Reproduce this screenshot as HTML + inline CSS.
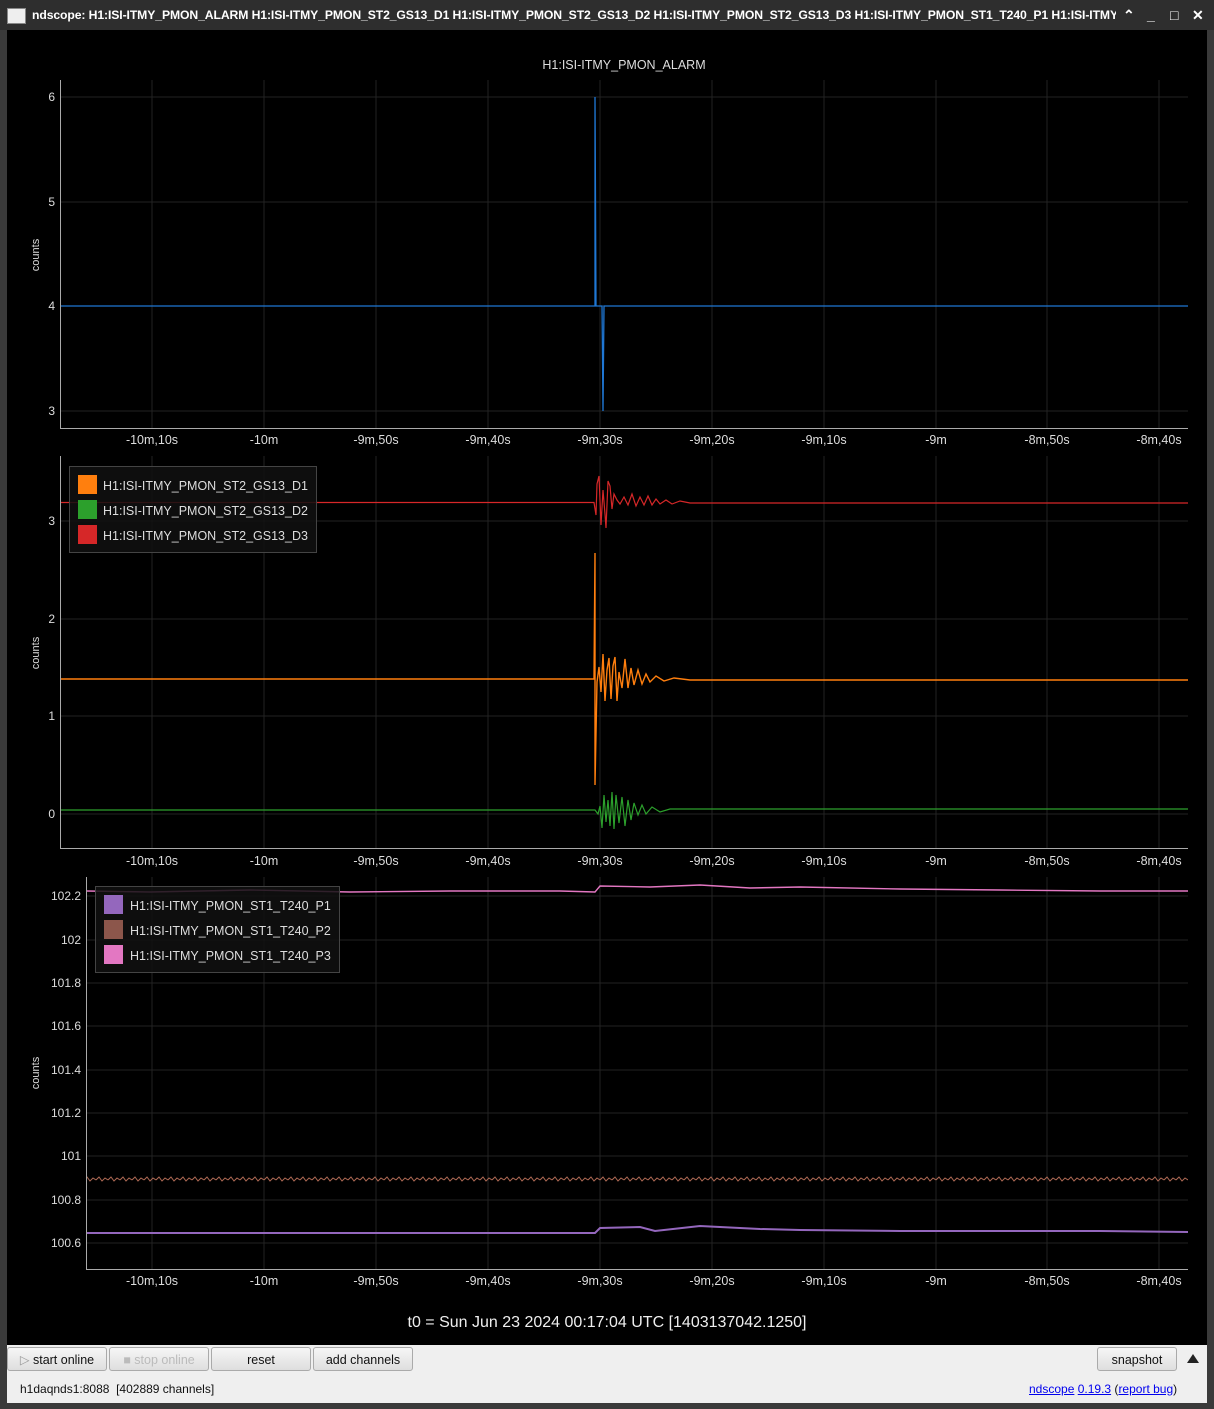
<!DOCTYPE html>
<html><head><meta charset="utf-8"><style>
body{margin:0;width:1214px;height:1409px;background:#3a3a3a;font-family:"Liberation Sans",sans-serif;overflow:hidden;position:relative}
.title{position:absolute;left:0;top:0;width:1214px;height:30px;background:#2e2e2e;color:#fff;font-weight:bold;font-size:12.2px;line-height:30px}
.title .ic{position:absolute;left:7px;top:8px;width:17px;height:14px;background:#eee;border:1px solid #888}
.title .t{position:absolute;left:32px;top:0;width:1084px;overflow:hidden;white-space:nowrap;letter-spacing:-0.1px}
.title .b{position:absolute;top:0;font-size:14px}
.panel{position:absolute;left:7px;top:1345px;width:1200px;height:58px;background:#efefef}
.btn{position:absolute;top:2px;height:24px;border:1px solid #aaa;border-radius:3px;background:linear-gradient(#f6f6f6,#dedede);font-size:12.5px;line-height:24px;text-align:center;color:#111;box-sizing:border-box}
.st{position:absolute;top:37px;font-size:12px;color:#111}
a{color:#00e;text-decoration:underline}
</style></head><body>
<div class="title"><div class="ic"></div><div class="t">ndscope: H1:ISI-ITMY_PMON_ALARM H1:ISI-ITMY_PMON_ST2_GS13_D1 H1:ISI-ITMY_PMON_ST2_GS13_D2 H1:ISI-ITMY_PMON_ST2_GS13_D3 H1:ISI-ITMY_PMON_ST1_T240_P1 H1:ISI-ITMY</div>
<span class="b" style="left:1123px">&#8963;</span><span class="b" style="left:1147px">_</span><span class="b" style="left:1170px">&#9633;</span><span class="b" style="left:1192px">&#10005;</span></div>
<svg style="position:absolute;left:7px;top:30px" width="1200" height="1315" viewBox="7 30 1200 1315" font-family="Liberation Sans" font-size="12" fill="#ddd">
<defs>
<pattern id="zz" width="12" height="8" patternUnits="userSpaceOnUse" x="0" y="1175"><path d="M0 5 L3 2 L6 6 L9 3 L12 5" stroke="#b06a55" fill="none" stroke-width="1"/></pattern>
</defs>
<rect x="7" y="30" width="1200" height="1315" fill="#000"/>
<g stroke="#222" stroke-width="1">
<path d="M152 80V428M264 80V428M376 80V428M488 80V428M600 80V428M712 80V428M824 80V428M936 80V428M1047 80V428M1159 80V428M60 97H1188M60 202H1188M60 306H1188M60 411H1188"/>
<path d="M152 456V848M264 456V848M376 456V848M488 456V848M600 456V848M712 456V848M824 456V848M936 456V848M1047 456V848M1159 456V848M60 521H1188M60 619H1188M60 716H1188M60 814H1188"/>
<path d="M152 877V1269M264 877V1269M376 877V1269M488 877V1269M600 877V1269M712 877V1269M824 877V1269M936 877V1269M1047 877V1269M1159 877V1269M86 896H1188M86 940H1188M86 983H1188M86 1026H1188M86 1070H1188M86 1113H1188M86 1156H1188M86 1200H1188M86 1243H1188"/>
</g>
<g stroke="#aaa" stroke-width="1" fill="none">
<path d="M60.5 80V428.5H1188"/><path d="M60.5 456V848.5H1188"/><path d="M86.5 877V1269.5H1188"/>
</g>
<text x="624" y="69" text-anchor="middle" font-size="12.5">H1:ISI-ITMY_PMON_ALARM</text>
<g text-anchor="end"><text x="55" y="101">6</text><text x="55" y="206">5</text><text x="55" y="310">4</text><text x="55" y="415">3</text>
<text x="55" y="525">3</text><text x="55" y="623">2</text><text x="55" y="720">1</text><text x="55" y="818">0</text>
<text x="81" y="900">102.2</text><text x="81" y="944">102</text><text x="81" y="987">101.8</text><text x="81" y="1030">101.6</text><text x="81" y="1074">101.4</text><text x="81" y="1117">101.2</text><text x="81" y="1160">101</text><text x="81" y="1204">100.8</text><text x="81" y="1247">100.6</text></g>
<g font-size="11"><text transform="translate(39 255) rotate(-90)" text-anchor="middle">counts</text><text transform="translate(39 653) rotate(-90)" text-anchor="middle">counts</text><text transform="translate(39 1073) rotate(-90)" text-anchor="middle">counts</text></g>
<g text-anchor="middle" font-size="12.5">
<g transform="translate(0 444)"><text x="152">-10m,10s</text><text x="264">-10m</text><text x="376">-9m,50s</text><text x="488">-9m,40s</text><text x="600">-9m,30s</text><text x="712">-9m,20s</text><text x="824">-9m,10s</text><text x="936">-9m</text><text x="1047">-8m,50s</text><text x="1159">-8m,40s</text></g>
<g transform="translate(0 865)"><text x="152">-10m,10s</text><text x="264">-10m</text><text x="376">-9m,50s</text><text x="488">-9m,40s</text><text x="600">-9m,30s</text><text x="712">-9m,20s</text><text x="824">-9m,10s</text><text x="936">-9m</text><text x="1047">-8m,50s</text><text x="1159">-8m,40s</text></g>
<g transform="translate(0 1285)"><text x="152">-10m,10s</text><text x="264">-10m</text><text x="376">-9m,50s</text><text x="488">-9m,40s</text><text x="600">-9m,30s</text><text x="712">-9m,20s</text><text x="824">-9m,10s</text><text x="936">-9m</text><text x="1047">-8m,50s</text><text x="1159">-8m,40s</text></g>
</g>
<path d="M61 306H595V97L596 306H602V306L603 411L604 306H1188" stroke="#1f77d4" fill="none" stroke-width="1.3"/>
<path d="M61 502.5H594L596 515L597 484L599 476L601 525L603 490L605 514L606 528L608 481L610 486L612 509L614 494L617 500L620 504L624 497L628 505L632 494L636 506L640 497L644 505L648 496L652 505L656 499L660 504L666 500L672 504L680 501L690 503H1188" stroke="#d62728" fill="none" stroke-width="1.2"/>
<path d="M61 679H594L595 553V785L597 682L599 667L601 692L603 654L605 701L607 670L609 658L611 699L613 666L615 657L617 701L619 672L622 688L625 659L628 688L631 668L634 685L638 670L642 684L646 674L650 682L656 676L664 681L674 678L690 680H1188" stroke="#ff7f0e" fill="none" stroke-width="1.4"/>
<path d="M61 810H595L598 814L600 806L602 828L604 795L606 822L608 800L610 826L612 792L614 829L616 795L619 823L622 797L625 826L628 800L631 820L634 803L638 815L642 805L646 814L652 807L660 812L670 809H1188" stroke="#2ca02c" fill="none" stroke-width="1.2"/>
<path d="M87 891L150 892L250 890L350 892L450 891L560 891L595 892L600 886L650 887L700 885L750 888L800 887L900 889L1000 890L1100 891L1188 891" stroke="#e377c2" fill="none" stroke-width="1.4"/>
<rect x="87" y="1175" width="1101" height="8" fill="url(#zz)"/>
<path d="M87 1233L300 1233L500 1233L595 1233L600 1228L640 1227L655 1231L700 1226L760 1229L800 1230L900 1231L1000 1231L1100 1231L1188 1232" stroke="#9467bd" fill="none" stroke-width="2"/>
<g font-size="12.5">
<rect x="69.5" y="466.5" width="247" height="86" fill="#111" fill-opacity="0.85" stroke="#444"/>
<rect x="78" y="475" width="19" height="19" fill="#ff7f0e"/><rect x="78" y="500" width="19" height="19" fill="#2ca02c"/><rect x="78" y="525" width="19" height="19" fill="#d62728"/>
<text x="103" y="490">H1:ISI-ITMY_PMON_ST2_GS13_D1</text><text x="103" y="515">H1:ISI-ITMY_PMON_ST2_GS13_D2</text><text x="103" y="540">H1:ISI-ITMY_PMON_ST2_GS13_D3</text>
<rect x="95.5" y="886.5" width="244" height="86" fill="#111" fill-opacity="0.85" stroke="#444"/>
<rect x="104" y="895" width="19" height="19" fill="#9467bd"/><rect x="104" y="920" width="19" height="19" fill="#8c564b"/><rect x="104" y="945" width="19" height="19" fill="#e377c2"/>
<text x="130" y="910">H1:ISI-ITMY_PMON_ST1_T240_P1</text><text x="130" y="935">H1:ISI-ITMY_PMON_ST1_T240_P2</text><text x="130" y="960">H1:ISI-ITMY_PMON_ST1_T240_P3</text>
</g>
<text x="607" y="1327" text-anchor="middle" font-size="16" fill="#eee">t0 = Sun Jun 23 2024 00:17:04 UTC [1403137042.1250]</text>
</svg>
<div class="panel">
<div class="btn" style="left:0;width:100px"><span style="color:#999">&#9655;</span> start online</div>
<div class="btn" style="left:102px;width:100px;color:#bbb">&#9632; stop online</div>
<div class="btn" style="left:204px;width:100px">reset</div>
<div class="btn" style="left:306px;width:100px">add channels</div>
<div class="btn" style="left:1090px;width:80px">snapshot</div>
<div style="position:absolute;left:1180px;top:9px;width:0;height:0;border-left:6px solid transparent;border-right:6px solid transparent;border-bottom:9px solid #222"></div>
<div class="st" style="left:13px">h1daqnds1:8088 &nbsp;[402889 channels]</div>
<div class="st" style="left:1022px"><a>ndscope</a> <a>0.19.3</a> (<a>report bug</a>)</div>
</div>
</body></html>
